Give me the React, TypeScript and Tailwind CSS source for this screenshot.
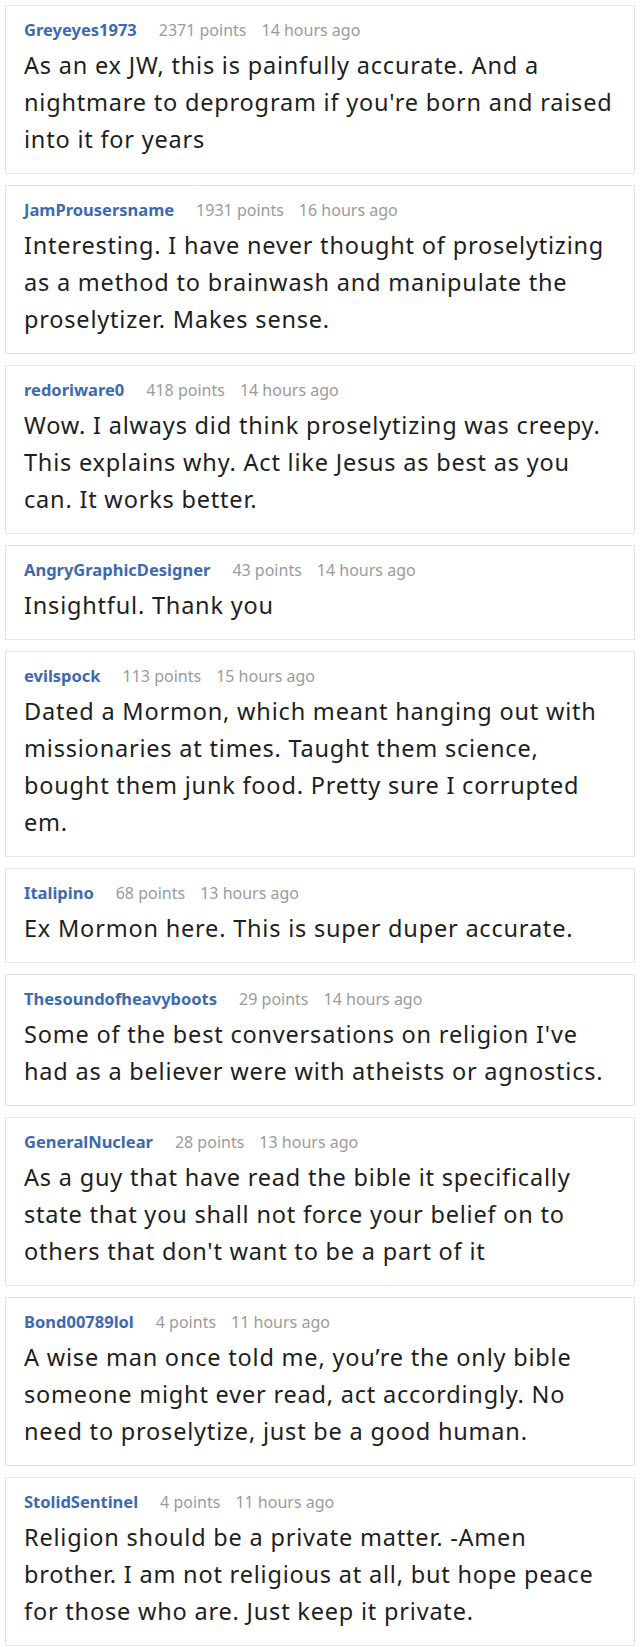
import React from "react";

interface Comment {
  user: string;
  points: string;
  time: string;
  lines: string[];
}

const comments: Comment[] = [
  {
    user: "Greyeyes1973",
    points: "2371 points",
    time: "14 hours ago",
    lines: [
      "As an ex JW, this is painfully accurate. And a",
      "nightmare to deprogram if you're born and raised",
      "into it for years",
    ],
  },
  {
    user: "JamProusersname",
    points: "1931 points",
    time: "16 hours ago",
    lines: [
      "Interesting. I have never thought of proselytizing",
      "as a method to brainwash and manipulate the",
      "proselytizer. Makes sense.",
    ],
  },
  {
    user: "redoriware0",
    points: "418 points",
    time: "14 hours ago",
    lines: [
      "Wow. I always did think proselytizing was creepy.",
      "This explains why. Act like Jesus as best as you",
      "can. It works better.",
    ],
  },
  {
    user: "AngryGraphicDesigner",
    points: "43 points",
    time: "14 hours ago",
    lines: ["Insightful. Thank you"],
  },
  {
    user: "evilspock",
    points: "113 points",
    time: "15 hours ago",
    lines: [
      "Dated a Mormon, which meant hanging out with",
      "missionaries at times. Taught them science,",
      "bought them junk food. Pretty sure I corrupted",
      "em.",
    ],
  },
  {
    user: "Italipino",
    points: "68 points",
    time: "13 hours ago",
    lines: ["Ex Mormon here. This is super duper accurate."],
  },
  {
    user: "Thesoundofheavyboots",
    points: "29 points",
    time: "14 hours ago",
    lines: [
      "Some of the best conversations on religion I've",
      "had as a believer were with atheists or agnostics.",
    ],
  },
  {
    user: "GeneralNuclear",
    points: "28 points",
    time: "13 hours ago",
    lines: [
      "As a guy that have read the bible it specifically",
      "state that you shall not force your belief on to",
      "others that don't want to be a part of it",
    ],
  },
  {
    user: "Bond00789lol",
    points: "4 points",
    time: "11 hours ago",
    lines: [
      "A wise man once told me, you\u2019re the only bible",
      "someone might ever read, act accordingly. No",
      "need to proselytize, just be a good human.",
    ],
  },
  {
    user: "StolidSentinel",
    points: "4 points",
    time: "11 hours ago",
    lines: [
      "Religion should be a private matter. -Amen",
      "brother. I am not religious at all, but hope peace",
      "for those who are. Just keep it private.",
    ],
  },
];

function CommentCard({ c }: { c: Comment }) {
  return (
    <div className="border border-[#e4e4e4] bg-white pt-[12px] pb-[15px] pl-[18px] pr-[2px]">
      <div className="flex items-baseline leading-[24px] whitespace-nowrap">
        <span className="text-[16.5px] font-bold text-[#3d69b1]">{c.user}</span>
        <span className="ml-[22px] text-[16px] text-[#9b9b9b]">{c.points}</span>
        <span className="ml-[15px] text-[16px] text-[#9b9b9b]">{c.time}</span>
      </div>
      <p className="mt-[5px] text-[23.5px] leading-[37px] tracking-[0.8px] text-[#1e1e1e] whitespace-nowrap">
        {c.lines.map((line, i) => (
          <React.Fragment key={i}>
            {i > 0 && <br />}
            {line}
          </React.Fragment>
        ))}
      </p>
    </div>
  );
}

export default function App() {
  return (
    <div
      className="w-[640px] bg-white px-[5px] pt-[5px] flex flex-col gap-[11px]"
      style={{ fontFamily: '"Noto Sans", "Open Sans", sans-serif' }}
    >
      {comments.map((c) => (
        <CommentCard key={c.user} c={c} />
      ))}
    </div>
  );
}
